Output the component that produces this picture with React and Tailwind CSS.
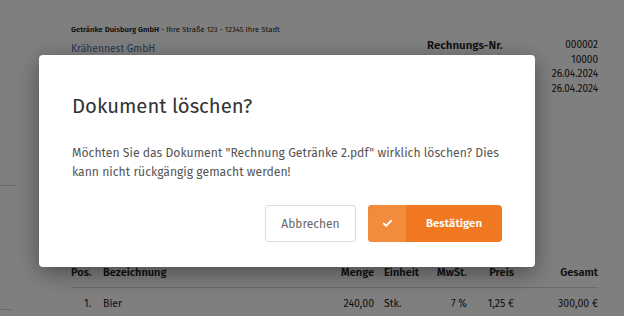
import { Check } from "lucide-react";

const rows = [
    { pos: "1.", name: "Bier", qty: "240,00", unit: "Stk.", vat: "7 %", price: "1,25 €", total: "300,00 €" },
];

export default function App() {
    return (
        <div className="relative w-[624px] h-[316px] overflow-hidden bg-white font-['Fira_Sans','Lato',sans-serif]">
            {/* document underneath */}
            <div className="absolute left-0 top-[185px] w-4 border-t border-gray-300"></div>
            <div className="absolute left-0 top-[309px] w-3 border-t border-gray-300"></div>

            <div className="pl-[71px] pr-[26px] pt-[25px] text-[#222]">
                <div className="text-[7.7px] leading-[10px]">
                    <span className="font-semibold">Getränke Duisburg GmbH</span> - Ihre Straße 123 - 12345 Ihre Stadt
                </div>
                <div className="flex justify-between mt-[3px]">
                    <div className="text-[10.3px] leading-[16px] text-[#4a6f9e] mt-[3px]">Krähennest GmbH</div>
                    <div className="w-[171px] text-[10px] leading-[14.5px]">
                        <div className="flex justify-between">
                            <span className="font-semibold text-[11.5px]">Rechnungs-Nr.</span>
                            <span>000002</span>
                        </div>
                        <div className="flex justify-between">
                            <span className="font-semibold text-[11.5px]">Kunden-Nr.</span>
                            <span>10000</span>
                        </div>
                        <div className="flex justify-between">
                            <span className="font-semibold text-[11.5px]">Rechnungsdatum</span>
                            <span>26.04.2024</span>
                        </div>
                        <div className="flex justify-between">
                            <span className="font-semibold text-[11.5px]">Lieferdatum</span>
                            <span>26.04.2024</span>
                        </div>
                    </div>
                </div>

                <div className="mt-[164px] text-[10.5px]">
                    <div className="flex h-[28px] items-center border-b border-gray-300 font-semibold text-[11px]">
                        <div className="w-[32px]">Pos.</div>
                        <div className="flex-1">Bezeichnung</div>
                        <div className="w-[50px] text-right">Menge</div>
                        <div className="w-[50px] pl-[10px]">Einheit</div>
                        <div className="w-[43px] text-right">MwSt.</div>
                        <div className="w-[47px] text-right">Preis</div>
                        <div className="w-[84px] text-right">Gesamt</div>
                    </div>
                    {rows.map((r) => (
                        <div key={r.pos} className="flex h-[32px] items-center">
                            <div className="w-[20px] text-right">{r.pos}</div>
                            <div className="w-[12px]"></div>
                            <div className="flex-1">{r.name}</div>
                            <div className="w-[50px] text-right">{r.qty}</div>
                            <div className="w-[50px] pl-[10px]">{r.unit}</div>
                            <div className="w-[43px] text-right">{r.vat}</div>
                            <div className="w-[47px] text-right">{r.price}</div>
                            <div className="w-[84px] text-right">{r.total}</div>
                        </div>
                    ))}
                </div>
            </div>

            {/* backdrop */}
            <div className="absolute inset-0 bg-black/50"></div>

            {/* dialog */}
            <div className="absolute left-[39px] top-[55px] w-[496px] h-[212px] bg-white rounded-[4px] shadow-[0_6px_22px_rgba(0,0,0,0.4)] px-[33px] pt-[36px] flex flex-col">
                <h2 className="text-[20.3px] leading-[30px] text-[#333]">Dokument löschen?</h2>
                <p className="mt-[23px] text-[12.2px] leading-[19px] text-[#555]">
                    Möchten Sie das Dokument "Rechnung Getränke 2.pdf" wirklich löschen? Dies kann nicht rückgängig gemacht werden!
                </p>
                <div className="flex justify-end gap-[12px] mt-auto mb-[25px]">
                    <button className="h-[37px] w-[91px] rounded-[3px] border border-[#dcdcdc] bg-white text-[12px] text-[#666]">
                        Abbrechen
                    </button>
                    <button className="h-[37px] w-[134px] flex rounded-[4px] overflow-hidden bg-[#ef7820] text-white">
                        <span className="w-[38px] h-full flex items-center justify-center bg-[#f38b3d]">
                            <Check size={11} strokeWidth={4} />
                        </span>
                        <span className="flex-1 flex items-center justify-center text-[11.5px] font-semibold">Bestätigen</span>
                    </button>
                </div>
            </div>
        </div>
    );
}
